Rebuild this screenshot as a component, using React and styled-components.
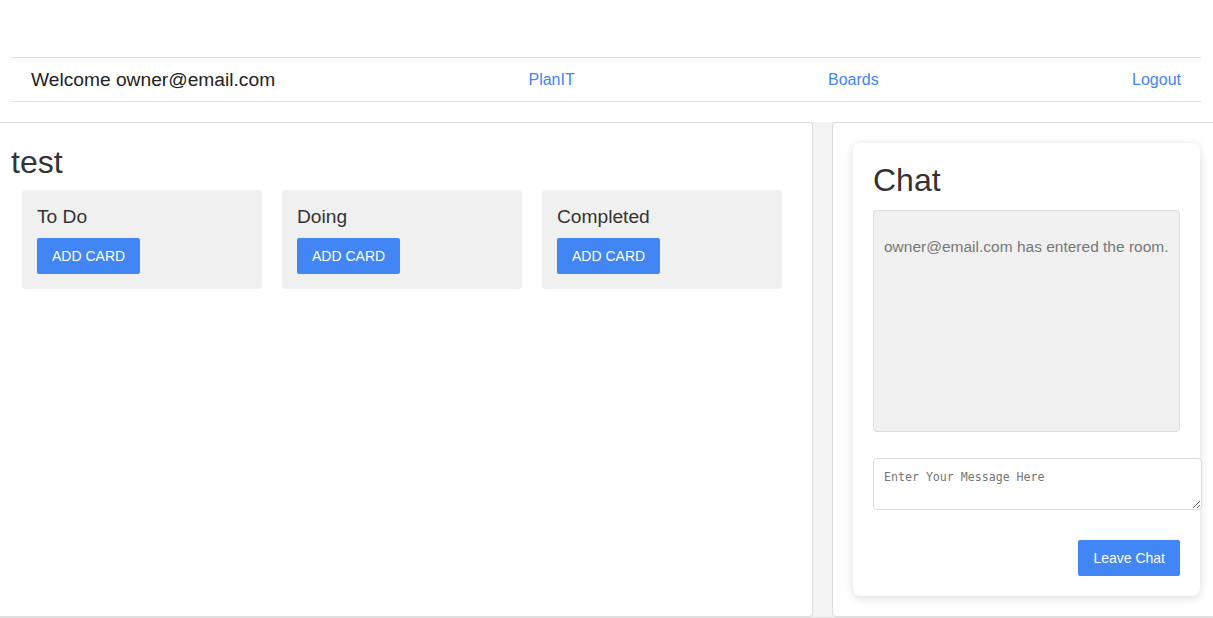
import React from "react";
import styled, { createGlobalStyle } from "styled-components";

const GlobalStyle = createGlobalStyle`
  body {
    margin: 0;
    background: #fff;
    font-family: "Liberation Sans", Arial, sans-serif;
    color: #333;
    overflow: hidden;
  }
`;

const Navbar = styled.nav`
  display: flex;
  align-items: center;
  justify-content: space-between;
  margin: 57px 12px 0 11px;
  height: 43px;
  padding: 0 20px;
  border-top: 1px solid #e0e0e0;
  border-bottom: 1px solid #e0e0e0;
`;

const Welcome = styled.span`
  font-size: 19.2px;
  color: #222;
`;

const NavLink = styled.a`
  font-size: 16px;
  color: #4285f4;
  text-decoration: none;
`;

const Board = styled.div`
  display: grid;
  grid-template-columns: 813px 1fr;
  column-gap: 19px;
  margin-top: 20px;
  margin-right: -3px;
  height: 495px;
  background: #f3f3f3;
  border-bottom: 1px solid #e0e0e0;
`;

const Panel = styled.section`
  background: #fff;
  border: 1px solid #ddd;
  border-radius: 4px;
  ${p => p.$left && "border-left: none; border-top-left-radius: 0; border-bottom-left-radius: 0;"}
  min-width: 0;
`;

const BoardTitle = styled.h2`
  margin: 22px 0 10px 11px;
  font-size: 32px;
  font-weight: 400;
  line-height: 1.1;
`;

const Lists = styled.div`
  display: flex;
  gap: 20px;
  padding-left: 22px;
`;

const List = styled.div`
  width: 240px;
  box-sizing: border-box;
  padding: 16px 15px 15px;
  background: #f0f0f0;
  border-radius: 4px;
`;

const ListTitle = styled.h3`
  margin: 0 0 10px;
  font-size: 19.2px;
  font-weight: 400;
  line-height: 1.15;
`;

const Button = styled.button`
  height: 36px;
  padding: 0 15px;
  border: none;
  border-radius: 2px;
  background: #4285f4;
  color: #fff;
  font-family: "Liberation Sans", Arial, sans-serif;
  font-size: 14px;
  text-transform: ${p => (p.$upper ? "uppercase" : "none")};
  cursor: pointer;
`;

const ChatCard = styled.div`
  margin: 20px 0 0 20px;
  width: 347px;
  box-sizing: border-box;
  padding: 20px;
  background: #fff;
  border-radius: 8px;
  box-shadow: 0 2px 10px rgba(0, 0, 0, 0.14);
`;

const ChatTitle = styled.h2`
  margin: 0 0 12px;
  font-size: 32px;
  font-weight: 400;
  line-height: 1.1;
  color: #333;
`;

const Messages = styled.div`
  height: 220px;
  padding: 0 10px;
  background: #f0f0f0;
  border: 1px solid #ddd;
  border-radius: 4px;
  overflow: hidden;
`;

const Message = styled.p`
  margin: 27px 0 0;
  font-size: 15.5px;
  color: #777;
  white-space: nowrap;
`;

const Input = styled.textarea`
  display: block;
  margin-top: 26px;
  width: 100%;
  height: 29px;
  padding: 11px 10px 10px;
  border: 1px solid #ddd;
  border-radius: 4px;
  font-family: "DejaVu Sans Mono", monospace;
  font-size: 11.6px;
  &::placeholder {
    color: #757575;
  }
`;

const Actions = styled.div`
  display: flex;
  justify-content: flex-end;
  margin-top: 30px;
`;

const lists = ["To Do", "Doing", "Completed"];

export default function App() {
  return (
    <>
      <GlobalStyle />
      <Navbar>
        <Welcome>Welcome owner@email.com</Welcome>
        <NavLink href="#">PlanIT</NavLink>
        <NavLink href="#">Boards</NavLink>
        <NavLink href="#">Logout</NavLink>
      </Navbar>
      <Board>
        <Panel $left>
          <BoardTitle>test</BoardTitle>
          <Lists>
            {lists.map(name => (
              <List key={name}>
                <ListTitle>{name}</ListTitle>
                <Button $upper>Add Card</Button>
              </List>
            ))}
          </Lists>
        </Panel>
        <Panel>
          <ChatCard>
            <ChatTitle>Chat</ChatTitle>
            <Messages>
              <Message>owner@email.com has entered the room.</Message>
            </Messages>
            <Input placeholder="Enter Your Message Here" />
            <Actions>
              <Button>Leave Chat</Button>
            </Actions>
          </ChatCard>
        </Panel>
      </Board>
    </>
  );
}
